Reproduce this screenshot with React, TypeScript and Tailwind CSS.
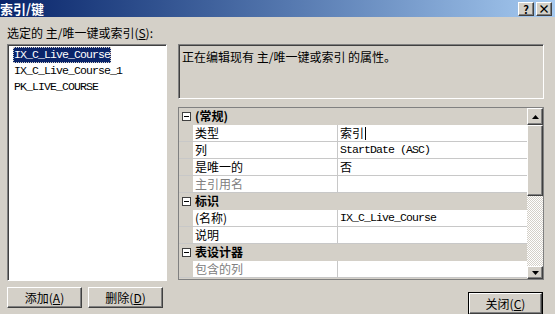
import React from "react";

const cjk = "font-['SimSun','Noto_Sans_CJK_SC',sans-serif]";
const mono = "font-['Liberation_Mono','Noto_Sans_CJK_SC',monospace] text-[11.5px] tracking-[-0.9px]";

const raised =
  "border border-t-white border-l-white border-r-[#404040] border-b-[#404040] shadow-[inset_-1px_-1px_0_#808080] bg-[#d4d0c8]";

type Row =
  | { kind: "cat"; label: string }
  | { kind: "prop"; name: string; value?: string; mono?: boolean; disabled?: boolean; caret?: boolean };

const rows: Row[] = [
  { kind: "cat", label: "(常规)" },
  { kind: "prop", name: "类型", value: "索引", caret: true },
  { kind: "prop", name: "列", value: "StartDate (ASC)", mono: true },
  { kind: "prop", name: "是唯一的", value: "否" },
  { kind: "prop", name: "主引用名", disabled: true },
  { kind: "cat", label: "标识" },
  { kind: "prop", name: "(名称)", value: "IX_C_Live_Course", mono: true },
  { kind: "prop", name: "说明" },
  { kind: "cat", label: "表设计器" },
  { kind: "prop", name: "包含的列", disabled: true },
];

function Minus() {
  return (
    <span className="flex h-[9px] w-[9px] items-center justify-center border border-[#404040] bg-white">
      <span className="h-px w-[5px] bg-black" />
    </span>
  );
}

function Btn({ label, k, wide = "w-[75px]" }: { label: string; k: string; wide?: string }) {
  return (
    <button className={`${raised} ${wide} flex h-[21px] items-center justify-center text-[12px] text-black`}>
      {label}(<span className="underline">{k}</span>)
    </button>
  );
}

export default function App() {
  return (
    <div className={`${cjk} flex h-[314px] w-[555px] flex-col overflow-hidden bg-[#d4d0c8] text-[12px] text-black`}>
      {/* title bar */}
      <div className="flex h-[17px] shrink-0 items-center justify-between bg-gradient-to-r from-[#0a246a] to-[#a6caf0] pr-[3px]">
        <span className="text-[13px] font-bold leading-none text-white">索引/键</span>
        <div className="flex gap-[2px] pt-[1px]">
          <span className={`${raised} flex h-[14px] w-[16px] items-center justify-center text-[11px] font-bold leading-none`}>?</span>
          <span className={`${raised} flex h-[14px] w-[16px] items-center justify-center text-[12px] font-bold leading-none`}>×</span>
        </div>
      </div>

      <div className="flex flex-1 gap-[11px] pl-[7px] pt-[9px]">
        {/* left column */}
        <div className="flex w-[160px] flex-col">
          <div className="h-[18px] leading-[14px]">
            选定的 主/唯一键或索引(<span className="underline">S</span>):
          </div>
          <div className="flex h-[237px] flex-col border border-t-[#808080] border-l-[#808080] border-r-white border-b-white bg-white pl-[5px] pt-[2px] shadow-[inset_1px_1px_0_#404040]">
            <div className={`${mono} h-[16px] w-fit bg-[#0a246a] px-px leading-[16px] text-white outline outline-1 outline-dotted outline-[#d4d0c8] -outline-offset-1`}>
              IX_C_Live_Course
            </div>
            <div className={`${mono} h-[16px] px-px leading-[16px]`}>IX_C_Live_Course_1</div>
            <div className={`${mono} h-[16px] px-px leading-[16px]`}>PK_LIVE_COURSE</div>
          </div>
          <div className="mt-[6px] flex gap-[6px]">
            <Btn label="添加" k="A" />
            <Btn label="删除" k="D" />
          </div>
        </div>

        {/* right column */}
        <div className="flex w-[366px] flex-col pt-[18px]">
          <div className="h-[55px] border border-t-[#808080] border-l-[#808080] border-r-white border-b-white pl-[3px] pt-[5px] leading-[14px] shadow-[inset_1px_1px_0_#404040]">
            正在编辑现有 主/唯一键或索引 的属性。
          </div>
          <div className="mt-[8px] flex h-[173px] border border-[#808080]">
            <div className="flex flex-1 flex-col">
              {rows.map((r, i) =>
                r.kind === "cat" ? (
                  <div key={i} className="flex h-[17px] items-center border-b border-[#d4d0c8]">
                    <span className="flex w-[14px] justify-center pl-[1px]">
                      <Minus />
                    </span>
                    <span className="pl-[2px] font-bold leading-none">{r.label}</span>
                  </div>
                ) : (
                  <div key={i} className="flex h-[17px] border-b border-[#c8c8c8]">
                    <span className="w-[14px] shrink-0 bg-[#d4d0c8]" />
                    <span
                      className={`flex w-[145px] shrink-0 items-center border-r border-[#c8c8c8] bg-white pl-[2px] ${
                        r.disabled ? "text-[#808080]" : ""
                      }`}
                    >
                      {r.name}
                    </span>
                    <span className={`flex flex-1 items-center bg-white pl-[2px] ${r.mono ? mono : ""}`}>
                      {r.value}
                      {r.caret && <span className="ml-px h-[13px] w-px bg-black" />}
                    </span>
                  </div>
                )
              )}
            </div>
            {/* scrollbar */}
            <div className="flex w-[16px] flex-col">
              <div className={`${raised} flex h-[17px] items-center justify-center`}>
                <svg width="7" height="4" viewBox="0 0 7 4"><path d="M3.5 0L7 4H0z" fill="#000" /></svg>
              </div>
              <div className={`${raised} h-[71px]`} />
              <div className="flex-1 bg-[repeating-conic-gradient(#d4d0c8_0_25%,#ffffff_0_50%)] bg-[length:2px_2px]" />
              <div className={`${raised} flex h-[13px] items-center justify-center`}>
                <svg width="7" height="4" viewBox="0 0 7 4"><path d="M0 0H7L3.5 4z" fill="#000" /></svg>
              </div>
            </div>
          </div>
          <div className="mt-[12px] flex justify-end pr-px">
            <div className="border border-black">
              <Btn label="关闭" k="C" wide="w-[73px]" />
            </div>
          </div>
        </div>
      </div>
    </div>
  );
}
